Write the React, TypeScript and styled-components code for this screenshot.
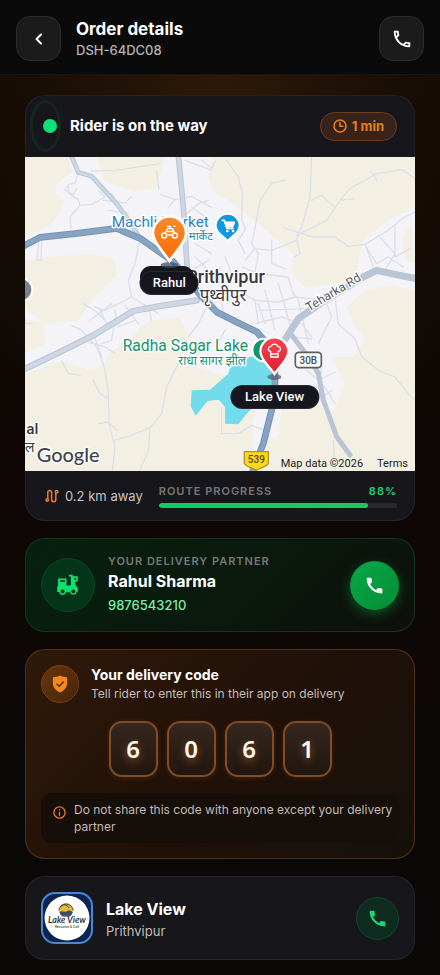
import React from 'react';
import styled, { createGlobalStyle, css } from 'styled-components';
import { MdCall, MdOutlineCall } from 'react-icons/md';

const GlobalStyle = createGlobalStyle`
  *, *::before, *::after { box-sizing: border-box; }
  body {
    margin: 0;
    background: #0b0907;
    color: #fff;
    font-family: "Inter", "Noto Sans", sans-serif;
    -webkit-font-smoothing: antialiased;
  }
  h1, h2, p { margin: 0; }
  svg { display: block; }
  button { font: inherit; padding: 0; cursor: pointer; }
`;

const Page = styled.div`
  min-height: 100vh;
  background:
    radial-gradient(ellipse 75% 460px at 50% 40px, #301a08 0%, #1c1006 45%, rgba(15, 8, 4, 0) 100%),
    linear-gradient(180deg, #0e0804 0, #0e0705 560px, #0a0908 900px);
`;

const Header = styled.header`
  display: flex;
  align-items: center;
  gap: 15px;
  padding: 16px 16px 13px;
  background: #0b0a0a;
  border-bottom: 1px solid #191511;
`;

const SquareButton = styled.button`
  display: grid;
  place-items: center;
  width: 45px;
  height: 45px;
  flex: none;
  color: #fff;
  background: #1b1b1b;
  border: 1px solid #2c2c2c;
  border-radius: 14px;
`;

const Grow = styled.div`
  flex: 1;
  min-width: 0;
`;

const PageTitle = styled.h1`
  font-size: 17px;
  line-height: 22px;
  font-weight: 700;
`;

const OrderId = styled.p`
  font-size: 13px;
  line-height: 20px;
  font-weight: 500;
  color: #b4b4b4;
`;

const Main = styled.main`
  display: flex;
  flex-direction: column;
  gap: 17px;
  padding: 20px 25px 15px;
`;

type Tone = 'dark' | 'green' | 'orange';

const tones = {
  dark: css`
    background: #17161b;
    box-shadow: inset 0 0 0 1px #242329;
  `,
  green: css`
    background: linear-gradient(135deg, #06210f 0%, #0a190d 50%, #0e100c 100%);
    box-shadow: inset 0 0 0 1px #133420;
  `,
  orange: css`
    background: linear-gradient(135deg, #301909 0%, #211108 50%, #15100b 100%);
    box-shadow: inset 0 0 0 1px #50301a;
  `,
};

const Card = styled.section<{ $tone: Tone }>`
  border-radius: 20px;
  overflow: hidden;
  ${p => tones[p.$tone]}
`;

const ContactCard = styled(Card)`
  display: flex;
  align-items: center;
  gap: 13px;
  padding: 16px;
`;

const StatusBar = styled.div`
  position: relative;
  display: flex;
  align-items: center;
  gap: 13px;
  height: 62px;
  padding: 0 18px;
`;

const StatusDot = styled.span`
  width: 14px;
  height: 14px;
  flex: none;
  border-radius: 50%;
  background: #0be27a;
`;

const PulseRing = styled.span`
  position: absolute;
  left: 5px;
  top: 5px;
  width: 31px;
  height: 52px;
  border: 3px solid #15251f;
  border-radius: 50%;
`;

const StatusTitle = styled.h2`
  flex: 1;
  font-size: 15px;
  line-height: 22px;
  font-weight: 700;
`;

const EtaBadge = styled.span`
  display: flex;
  align-items: center;
  gap: 5px;
  height: 29px;
  padding: 0 12px;
  border: 1px solid #6b3f20;
  border-radius: 15px;
  background: #38231a;
  color: #f07c1e;
  font-size: 13px;
  font-weight: 700;
`;

const MapArea = styled.div`
  position: relative;
  height: 314px;
  background: #f5f4f8;
`;

const MapCanvas = styled.svg`
  width: 100%;
  height: 314px;
  font-family: "Roboto", "Noto Sans", sans-serif;
`;

const Pin = styled.div<{ $left: number; $top: number }>`
  position: absolute;
  left: ${p => p.$left}%;
  top: ${p => p.$top}px;
  display: flex;
  flex-direction: column;
  align-items: center;
  transform: translateX(-50%);
`;

const PinLabel = styled.span<{ $wide?: boolean }>`
  padding: 0 ${p => (p.$wide ? 14 : 12)}px;
  border-radius: 11px;
  background: #16161f;
  box-shadow: 0 0 0 1px #292932;
  color: #fff;
  font: 500 13px/22px "Roboto", sans-serif;
  white-space: nowrap;
`;

const GhostLabel = styled.span`
  position: absolute;
  left: calc(37% - 29px);
  top: 109px;
  width: 54px;
  height: 22px;
  border-radius: 11px;
  background: #16161f;
`;

const MapCredits = styled.div`
  position: absolute;
  right: 0;
  bottom: 0;
  display: flex;
  gap: 14px;
  padding: 0 7px;
  color: #222;
  font: 400 11px/15px "Roboto", sans-serif;
  a { color: inherit; text-decoration: none; }
`;

const RouteBar = styled.div`
  display: flex;
  align-items: center;
  gap: 16px;
  height: 50px;
  padding: 0 18px 0 20px;
`;

const Distance = styled.span`
  display: flex;
  align-items: center;
  gap: 6px;
  color: #c5c5c8;
  font-size: 13px;
  line-height: 18px;
  white-space: nowrap;
`;

const ProgressHead = styled.div`
  display: flex;
  justify-content: space-between;
  margin-bottom: 5px;
`;

const Overline = styled.span<{ $accent?: boolean }>`
  font-size: 11px;
  line-height: 14px;
  font-weight: 600;
  letter-spacing: 1px;
  color: ${p => (p.$accent ? '#1fd074' : '#77777a')};
`;

const ProgressTrack = styled.div`
  height: 5px;
  border-radius: 3px;
  background: #29282d;
  overflow: hidden;
`;

const ProgressFill = styled.div`
  height: 100%;
  border-radius: 3px;
  background: linear-gradient(90deg, #0dcc68, #22c55e);
`;

const Disc = styled.div<{ $tone: 'green' | 'orange'; $size: number }>`
  display: grid;
  place-items: center;
  width: ${p => p.$size}px;
  height: ${p => p.$size}px;
  flex: none;
  border-radius: 50%;
  ${p => p.$tone === 'green'
    ? css`background: #04351a; border: 1px solid #0a4b29;`
    : css`background: linear-gradient(135deg, #673608, #46250c); border: 1px solid #7b4519;`}
`;

const CallButton = styled.button<{ $solid?: boolean }>`
  display: grid;
  place-items: center;
  flex: none;
  border-radius: 50%;
  ${p => p.$solid
    ? css`
      width: 49px;
      height: 49px;
      color: #fff;
      border: 1px solid #0b9a43;
      background: linear-gradient(135deg, #09a84a, #048c33);
      box-shadow: 0 4px 12px rgba(4, 150, 56, 0.5);
    `
    : css`
      width: 43px;
      height: 43px;
      color: #1fd074;
      border: 1px solid #124a2d;
      background: #0d2b1f;
    `}
`;

const PartnerInfo = styled.div`
  display: flex;
  flex: 1;
  flex-direction: column;
  min-width: 0;
`;

const Name = styled.h2`
  font-size: 16px;
  line-height: 26px;
  font-weight: 700;
`;

const PhoneLink = styled.a`
  align-self: flex-start;
  color: #7ce9a6;
  font-size: 13px;
  line-height: 22px;
  font-weight: 500;
  text-decoration: none;
`;

const CodeCard = styled(Card)`
  padding: 16px;
`;

const CodeHead = styled.div`
  display: flex;
  align-items: center;
  gap: 12px;
  height: 38px;
`;

const CodeTitle = styled.h2`
  font-size: 14px;
  line-height: 20px;
  font-weight: 700;
`;

const Subtle = styled.p<{ $large?: boolean }>`
  font-size: ${p => (p.$large ? 13 : 12)}px;
  line-height: 18px;
  color: #c3bdb9;
`;

const Digits = styled.div`
  display: flex;
  justify-content: center;
  gap: 9px;
  padding: 18px 0 16px;
`;

const Digit = styled.span`
  display: grid;
  place-items: center;
  width: 49px;
  height: 56px;
  border: 2px solid #814c26;
  border-radius: 13px;
  background: linear-gradient(180deg, #36271f, #21160f);
  box-shadow: 0 1px 5px rgba(160, 78, 18, 0.25);
  color: #fffaf3;
  font: 600 24px/32px "Noto Sans", sans-serif;
  text-shadow: 0 3px 8px rgba(255, 140, 40, 0.5);
`;

const Notice = styled.div`
  display: flex;
  align-items: flex-start;
  gap: 8px;
  padding: 8px 2px 8px 12px;
  border-radius: 11px;
  background: #160e08;
  color: #c1bab5;
  font-size: 12px;
  line-height: 17px;
  svg { flex: none; margin-top: 5px; }
`;

const Logo = styled.svg`
  width: 52px;
  height: 52px;
  flex: none;
`;

function BackIcon() {
  return (
    <svg width="22" height="22" viewBox="0 0 22 22" fill="none" stroke="currentColor" strokeWidth="2" strokeLinecap="round" strokeLinejoin="round">
      <path d="M13 6.500 8.500 11l4.500 4.500" />
    </svg>
  );
}

function ClockIcon() {
  return (
    <svg width="14" height="14" viewBox="0 0 14 14" fill="none" stroke="currentColor" strokeWidth="1.600" strokeLinecap="round">
      <circle cx="7" cy="7" r="6" />
      <path d="M7 3.700V7.200h2.800" />
    </svg>
  );
}

function RouteIcon() {
  return (
    <svg width="14" height="14" viewBox="0 0 14 14" fill="none" stroke="#f07a28" strokeWidth="1.500" strokeLinecap="round">
      <circle cx="2.200" cy="11" r="1.200" />
      <path d="M2.800 9.600V3.400a1.900 1.900 0 0 1 3.800 0v7.200a2.100 2.100 0 0 0 4.200 0V4.400" />
      <circle cx="11.600" cy="2.800" r="1.300" />
    </svg>
  );
}

function ScooterIcon() {
  return (
    <svg width="24" height="24" viewBox="0 0 24 24">
      <path fill="#0fe06d" d="M2 5.500h8.500v7h3.200c.7 0 1.200-.5 1.200-1.200V3.600h-2V1.800h3.900v1.400h5v5.300h-2.600v2.600l2.700 4.300v3.400h-1.200a3.400 3.400 0 0 1-6.700.4H10a3.400 3.400 0 0 1-6.700-.2H1.200v-5.500L2 12.300z" />
      <path fill="#04351a" d="M4 7.200h5v1.900H4zM18.400 5h1.800v1.800h-1.800z" />
      <circle cx="6.600" cy="18.600" r="2" fill="#04351a" />
      <circle cx="17.300" cy="18.600" r="2" fill="#04351a" />
    </svg>
  );
}

function ShieldIcon() {
  return (
    <svg width="16" height="18" viewBox="0 0 16 18">
      <path fill="#f9871c" d="M8 .5c2 1.100 4.200 1.700 6.500 1.700.4 0 .6.200.6.600v5.700c0 4-2.600 7.100-7.100 9-4.500-1.900-7.100-5-7.100-9V2.800c0-.4.2-.6.6-.6C3.800 2.200 6 1.600 8 .5z" />
      <path fill="none" stroke="#5a2d0a" strokeWidth="1.500" strokeLinecap="round" strokeLinejoin="round" d="m5 9.200 2.200 2.100 4-4.200" />
    </svg>
  );
}

function InfoIcon() {
  return (
    <svg width="13" height="13" viewBox="0 0 13 13" fill="none" stroke="#e56f33" strokeWidth="1.400" strokeLinecap="round">
      <circle cx="6.500" cy="6.500" r="5.600" />
      <path d="M6.500 6.200v3M6.500 3.800v.1" />
    </svg>
  );
}

function RiderPinShape() {
  return (
    <svg width="40" height="57" viewBox="0 0 40 57">
      <defs>
        <linearGradient id="riderPin" x1="0" y1="0" x2="0" y2="1">
          <stop offset="0" stopColor="#ff8a26" />
          <stop offset="1" stopColor="#f56c08" />
        </linearGradient>
      </defs>
      <ellipse cx="20" cy="50" rx="9" ry="3" fill="#3f5266" opacity=".75" />
      <path d="M20 46C15 38 3.500 28 3.500 18a16.500 16.500 0 0 1 33 0C36.500 28 25 38 20 46z" fill="url(#riderPin)" stroke="#fff" strokeWidth="2.600" />
      <g fill="none" stroke="#fff" strokeWidth="1.500" strokeLinecap="round" strokeLinejoin="round">
        <circle cx="14.600" cy="20.500" r="2.500" />
        <circle cx="25.400" cy="20.500" r="2.500" />
        <path d="M16 17.500l2.200-4h4.500l2.200 4.200M18 16.600h5.500M18.200 20h3.500M24.500 11.300h1M18 11.400h3" />
      </g>
    </svg>
  );
}

function StorePinShape() {
  return (
    <svg width="36" height="50" viewBox="0 0 36 50">
      <defs>
        <linearGradient id="storePin" x1="0" y1="0" x2="0" y2="1">
          <stop offset="0" stopColor="#fb4450" />
          <stop offset="1" stopColor="#dc1e2c" />
        </linearGradient>
      </defs>
      <ellipse cx="18" cy="41" rx="7" ry="3" fill="#54606c" opacity=".75" />
      <path d="M18 38C14 31 4 24 4 15.500a14 14 0 0 1 28 0C32 24 22 31 18 38z" fill="url(#storePin)" stroke="#fff" strokeWidth="2.200" />
      <path d="M14.300 15.500c-1.700-.3-2.300-1.400-2.300-2.600 0-1.600 1.300-2.500 2.600-2.300.6-1.800 1.900-2.500 3.400-2.500s2.800.7 3.400 2.500c1.300-.2 2.600.7 2.600 2.300 0 1.200-.6 2.300-2.300 2.600V18h-7.400zM14.300 18v3h7.400v-3" fill="none" stroke="#fff" strokeWidth="1.300" strokeLinejoin="round" />
    </svg>
  );
}

function CityMap() {
  const halo = { stroke: '#fff', strokeWidth: 8, paintOrder: 'stroke', strokeLinejoin: 'round' as const };
  return (
    <MapCanvas viewBox="0 0 1170 942" preserveAspectRatio="xMidYMid slice" role="img" aria-label="Map of Prithvipur">
      <rect width="1170" height="942" fill="#f4f3f8" />
      <g fill="#f3f0e3">
        <path d="M0 0H130L142 48 95 80 90 110 118 130 100 175 70 210 0 240z" />
        <path d="M215 0H420L402 60 395 92 330 105 290 92 235 68z" />
        <path d="M560 0H1170V152L1090 190 1020 245 1000 300 995 375 920 380 840 392 800 350 805 290 740 235 650 160 610 130 565 105 550 60z" />
        <path d="M0 310 90 298 190 290 268 305 278 350 210 420 160 490 60 500 20 470 0 445z" />
        <path d="M0 485 55 495 60 560 0 590z" />
        <path d="M0 650 110 612 200 640 240 620 255 585 320 545 345 510 380 490 465 482 490 530 470 590 520 635 600 655 690 640 690 780 670 942H0z" />
        <path d="M1170 400 1100 385 1020 400 965 450 990 510 1020 545 985 600 920 600 960 680 930 760 900 770 860 700 800 700 770 800 745 942H1170z" />
        <path d="M1160 190 1130 250 1140 310 1170 320z" />
        <path d="M728 700 862 690 905 820 940 942H690z" />
      </g>
      <path fill="#73dcec" d="M500 700 555 698 610 650 620 610 735 590 752 650 742 720 700 735 665 770 640 802 600 800 600 750 582 728 548 732 512 776 497 748z" />
      <path fill="#f4f3f8" d="M680 800 740 700 770 740 760 850 700 830z" />

      <g fill="none" stroke="#dcdfe9" strokeWidth="4" strokeLinecap="round" strokeLinejoin="round">
        <path d="M160 48 150 78 130 82 132 110 160 128 165 145 135 180 138 215M130 82 120 100 145 112 155 95M165 145 200 142 240 120 222 102" />
        <path d="M200 42 270 40 405 20M395 42 402 96M530 10 560 34 572 12M405 112 450 128 500 118 560 152M430 150 450 128M485 170 520 140 550 130M500 150 540 180" />
        <path d="M235 130 300 138 318 120M250 160 310 168M260 110 285 150M42 246 36 310 48 310 50 250" />
        <path d="M605 10 640 60 652 112 650 190 662 215 640 250 660 290M690 215 705 130 740 78 780 70M860 0 855 120 830 210 815 245 825 290 808 300M860 130 890 115 930 150M814 235 905 190 945 130 975 95 1055 50 1130 38 1165 60M1040 45 1055 70M945 130 985 125" />
        <path d="M775 212 860 240 930 240 970 268 1020 262 1090 220 1130 185 1170 165M815 250 740 280 690 275 660 310M690 215 680 260 700 290 690 345 720 360M740 250 740 320 780 335M650 330 700 350 790 360 800 395" />
        <path d="M1020 265 1055 320 1090 300 1135 330M1060 235 1110 290 1080 340M1110 210 1110 300 1155 275M1025 275 1045 330" />
        <path d="M345 245 330 320 310 370 320 420 400 470M320 420 280 440 240 460 210 450M175 440 215 465 240 490M195 490 260 440M300 445 340 500M225 460 250 510M270 460 280 510 330 490" />
        <path d="M140 505 170 520 215 570 235 620 250 700 252 800 270 870 262 942M190 555 240 570 270 590M205 530 230 600M230 560 260 550 270 480M110 612 130 650 165 655M205 670 225 710 250 725M220 800 250 795 275 820M265 850 320 835 375 812 410 770 425 690 460 620M375 812 370 880 345 940M370 450 380 490M490 540 520 500 545 450" />
        <path d="M590 440 600 490 640 480M560 430 580 460M600 520 580 560M660 350 640 400 690 430 700 500M690 430 760 435 810 420 900 430M700 460 840 455M720 400 750 520M760 380 800 520M690 500 770 480 830 500 860 540M800 400 820 430 850 560M860 440 790 540M900 430 920 480 880 560M930 420 940 500 990 545 1010 600 1060 640 1110 660 1150 710 1170 730M720 500 700 440M790 540 860 545" />
        <path d="M845 640 880 670 930 645M890 620 880 730 920 700M850 690 900 690 930 740M590 750 590 830 640 830 680 805 720 820M925 850 930 940M0 500 20 500M510 300 560 350M500 340 550 310M520 370 590 330M510 260 560 290M600 300 620 350M480 10 560 40" />
      </g>

      <g fill="none" strokeLinecap="round" strokeLinejoin="round">
        <g stroke="#b9c5d5">
          <path strokeWidth="14" d="M138-5 160 46 200 58 275 140 315 195 345 244" />
          <path strokeWidth="17" d="M460-5 475 150 487 340" />
          <path strokeWidth="19" d="M-5 638 95 590 205 535 325 462 400 448 515 430" />
          <path strokeWidth="21" d="M1175 365 1110 352 1055 340 1015 360 900 430 820 485 785 540 740 600" />
          <path strokeWidth="15" d="M800 534 850 600 880 649 895 729 935 839 975 894" />
        </g>
        <g stroke="#cdd7e3">
          <path strokeWidth="8" d="M138-5 160 46 200 58 275 140 315 195 345 244" />
          <path strokeWidth="11" d="M460-5 475 150 487 340" />
          <path strokeWidth="13" d="M-5 638 95 590 205 535 325 462 400 448 515 430" />
        </g>
        <path stroke="#7592b2" strokeWidth="20" d="M-5 267 45 241 150 230 275 214 345 244 445 314 530 419 575 465 645 500 695 524 735 569 750 649 750 719 715 859 680 950" />
        <path stroke="#86a3c1" strokeWidth="14" d="M-5 267 45 241 150 230 275 214 345 244 445 314 530 419 575 465 645 500 695 524 735 569 750 649 750 719 715 859 680 950" />
      </g>

      <g fill="#2b83c2" {...halo}>
        <text x="260" y="210" fontSize="46">Machli Market</text>
        <text x="564" y="249" fontSize="34" textAnchor="end">मछली मार्केट</text>
      </g>
      <g fill="#38383d" {...halo}>
        <text x="484" y="377" fontSize="54" fontWeight="500">Prithvipur</text>
        <text x="524" y="433" fontSize="51">पृथ्वीपुर</text>
        <text x="4" y="832" fontSize="46" fontWeight="500">al</text>
        <text x="0" y="884" fontSize="42">ल</text>
      </g>
      <g fill="#17926f" {...halo}>
        <text x="293" y="583" fontSize="47">Radha Sagar Lake</text>
        <text x="460" y="623" fontSize="36">राधा सागर झील</text>
      </g>
      <text fill="#555a61" fontSize="37" transform="translate(852 464) rotate(-31)" {...halo}>Teharka Rd</text>

      <path d="M608 170a36 36 0 0 1 36 36c0 22-22 30-36 46-14-16-36-24-36-46a36 36 0 0 1 36-36z" fill="#1298e0" stroke="#fff" strokeWidth="6" />
      <g fill="none" stroke="#fff" strokeWidth="5" strokeLinejoin="round">
        <path d="M590 190h8l8 24h20" />
        <path d="M600 196h28l-5 12h-19z" fill="#fff" />
      </g>
      <circle cx="607" cy="222" r="4" fill="#fff" />
      <circle cx="624" cy="222" r="4" fill="#fff" />
      <circle cx="-12" cy="398" r="34" fill="#78828c" stroke="#fff" strokeWidth="6" />
      <circle cx="716" cy="579" r="34" fill="#12966f" stroke="#fff" strokeWidth="6" />

      <rect x="811" y="586" width="78" height="46" rx="10" fill="#fff" stroke="#5b5d62" strokeWidth="5" />
      <text x="850" y="620" fontSize="30" fontWeight="500" fill="#4a4c51" textAnchor="middle">30B</text>
      <path d="M658 884h72v36c-8 12-22 10-36 20-14-10-28-8-36-20z" fill="#fbd91d" stroke="#ad9429" strokeWidth="4" strokeLinejoin="round" />
      <text x="694" y="919" fontSize="30" fontWeight="500" fill="#5c4a00" textAnchor="middle">539</text>
      <text x="35" y="914" fontSize="60" fontWeight="500" fill="#414348" fontFamily="Lato, sans-serif" {...halo}>Google</text>
    </MapCanvas>
  );
}

function LakeViewLogo() {
  return (
    <Logo viewBox="0 0 52 52" role="img" aria-label="Lake View logo">
      <rect x="1" y="1" width="50" height="50" rx="13" fill="#0a2450" stroke="#4a86d3" strokeWidth="2" />
      <circle cx="26" cy="26" r="22.500" fill="#fff" />
      <circle cx="25" cy="18" r="7" fill="#e9bb35" />
      <path d="M18.500 20c3-2 5 1 8-1 2-1 4 0 5.300 1-.4 2-1.600 3.500-3 4.500h-7.300c-1.600-1-2.700-2.600-3-4.500z" fill="#44566a" />
      <path d="M19 15c3-3 7-3 9 1M17.800 18.500a7.300 7.300 0 0 1 14.500 0M20 21.500c3-1.500 6 1 10-.5" fill="none" stroke="#34404a" strokeWidth=".9" />
      <text x="26" y="31" fontSize="9" fontWeight="600" fontStyle="italic" fontFamily="Lato, sans-serif" fill="#1d1d1d" textAnchor="middle">Lake View</text>
      <text x="26" y="36" fontSize="3" fontWeight="700" fontFamily="Lato, sans-serif" fill="#55503d" textAnchor="middle">Restaurant &amp; Cafe</text>
    </Logo>
  );
}

export default function App() {
  const progress = 88;
  return (
    <Page>
      <GlobalStyle />
      <Header>
        <SquareButton aria-label="Back"><BackIcon /></SquareButton>
        <Grow>
          <PageTitle>Order details</PageTitle>
          <OrderId>DSH-64DC08</OrderId>
        </Grow>
        <SquareButton aria-label="Call support"><MdOutlineCall size={22} /></SquareButton>
      </Header>

      <Main>
        <Card $tone="dark">
          <StatusBar>
            <PulseRing />
            <StatusDot />
            <StatusTitle>Rider is on the way</StatusTitle>
            <EtaBadge><ClockIcon />1 min</EtaBadge>
          </StatusBar>
          <MapArea>
            <CityMap />
            <GhostLabel />
            <Pin $left={37} $top={58}>
              <RiderPinShape />
              <PinLabel>Rahul</PinLabel>
            </Pin>
            <Pin $left={64} $top={179}>
              <StorePinShape />
              <PinLabel $wide>Lake View</PinLabel>
            </Pin>
            <MapCredits>
              <span>Map data ©2026</span>
              <a href="#terms">Terms</a>
            </MapCredits>
          </MapArea>
          <RouteBar>
            <Distance><RouteIcon />0.2 km away</Distance>
            <Grow>
              <ProgressHead>
                <Overline>ROUTE PROGRESS</Overline>
                <Overline $accent>{progress}%</Overline>
              </ProgressHead>
              <ProgressTrack role="progressbar" aria-label="Route progress" aria-valuenow={progress} aria-valuemin={0} aria-valuemax={100}>
                <ProgressFill style={{ width: `${progress}%` }} />
              </ProgressTrack>
            </Grow>
          </RouteBar>
        </Card>

        <ContactCard $tone="green">
          <Disc $tone="green" $size={54}><ScooterIcon /></Disc>
          <PartnerInfo>
            <Overline>YOUR DELIVERY PARTNER</Overline>
            <Name>Rahul Sharma</Name>
            <PhoneLink href="tel:9876543210">9876543210</PhoneLink>
          </PartnerInfo>
          <CallButton $solid aria-label="Call Rahul Sharma"><MdCall size={21} /></CallButton>
        </ContactCard>

        <CodeCard $tone="orange">
          <CodeHead>
            <Disc $tone="orange" $size={38}><ShieldIcon /></Disc>
            <Grow>
              <CodeTitle>Your delivery code</CodeTitle>
              <Subtle>Tell rider to enter this in their app on delivery</Subtle>
            </Grow>
          </CodeHead>
          <Digits>
            {['6', '0', '6', '1'].map((digit, i) => <Digit key={i}>{digit}</Digit>)}
          </Digits>
          <Notice>
            <InfoIcon />
            <p>Do not share this code with anyone except your delivery partner</p>
          </Notice>
        </CodeCard>

        <ContactCard $tone="dark">
          <LakeViewLogo />
          <Grow>
            <Name>Lake View</Name>
            <Subtle $large>Prithvipur</Subtle>
          </Grow>
          <CallButton aria-label="Call Lake View"><MdCall size={21} /></CallButton>
        </ContactCard>
      </Main>
    </Page>
  );
}
